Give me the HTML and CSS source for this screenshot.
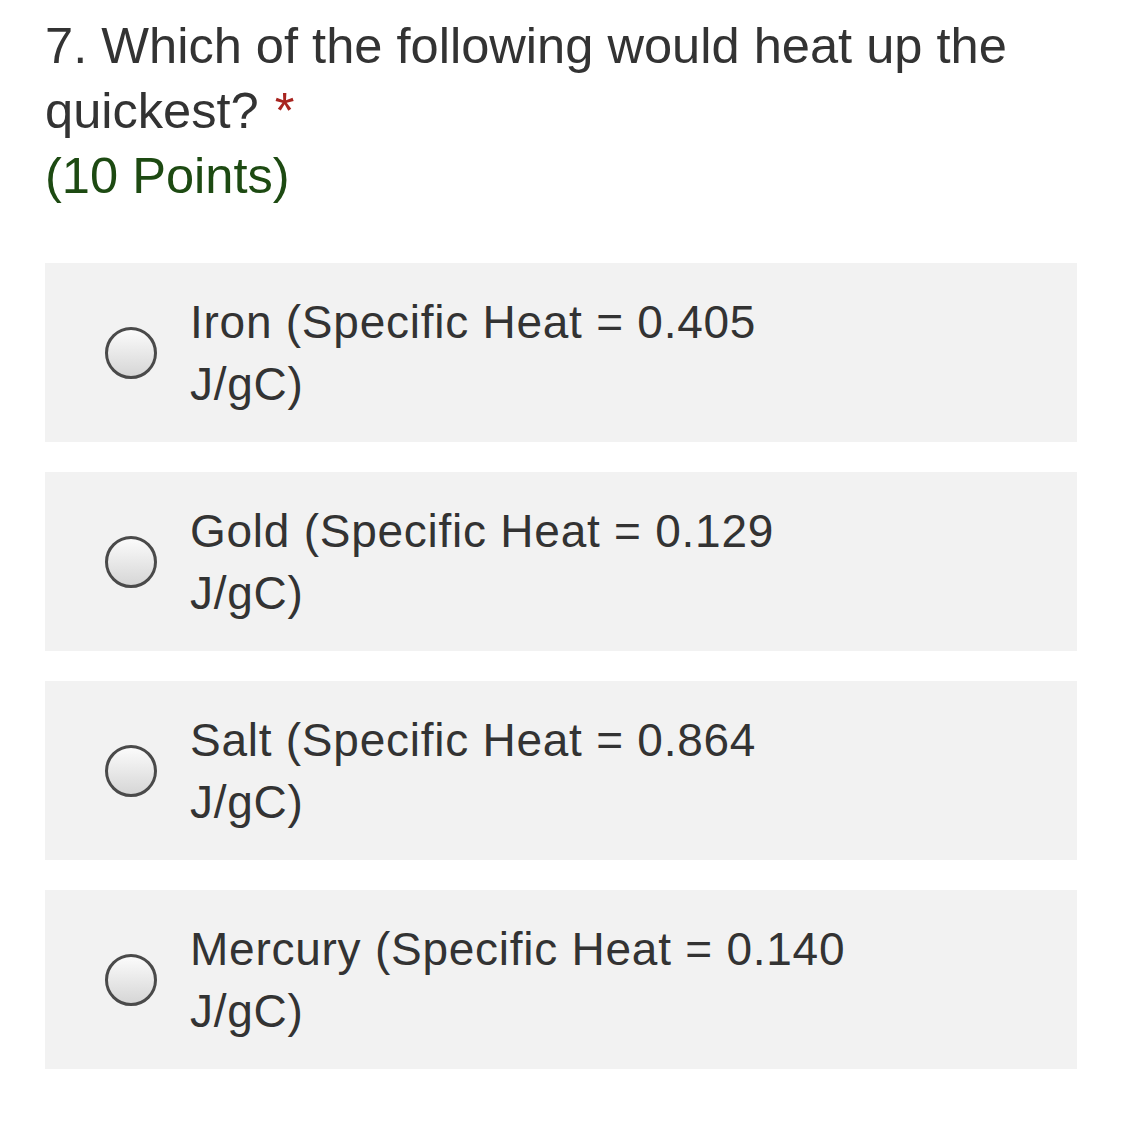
FILE: index.html
```html
<!DOCTYPE html>
<html>
<head>
<meta charset="utf-8">
<link rel="stylesheet" href="styles.css">
</head>
<body>
<div class="question">
  <div class="title">7. Which of the following would heat up the quickest? <span class="req">*</span></div>
  <div class="points">(10 Points)</div>
  <div class="options">
    <label class="option"><span class="radio"></span><span class="text">Iron (Specific Heat = 0.405 J/gC)</span></label>
    <label class="option"><span class="radio"></span><span class="text">Gold (Specific Heat = 0.129 J/gC)</span></label>
    <label class="option"><span class="radio"></span><span class="text">Salt (Specific Heat = 0.864 J/gC)</span></label>
    <label class="option"><span class="radio"></span><span class="text">Mercury (Specific Heat = 0.140 J/gC)</span></label>
  </div>
</div>
</body>
</html>
```
FILE: styles.css
```css
html, body {
  margin: 0;
  padding: 0;
  background: #ffffff;
}
body {
  font-family: "Liberation Sans", Arial, sans-serif;
  color: #333333;
}
.question {
  padding: 13px 45px 0 45px;
}
.title {
  font-size: 50.6px;
  line-height: 65px;
  color: #333333;
  max-width: 980px;
}
.req {
  color: #a8241f;
  margin-left: 2px;
}
.points {
  font-size: 50.6px;
  line-height: 65px;
  color: #1d4a12;
}
.options {
  margin-top: 55px;
  display: flex;
  flex-direction: column;
  gap: 30px;
}
.option {
  display: flex;
  align-items: center;
  background: #f2f2f2;
  height: 179px;
  padding-left: 60px;
  box-sizing: border-box;
}
.radio {
  flex: none;
  width: 46px;
  height: 46px;
  border: 3px solid #4a4a4a;
  border-radius: 50%;
  background: linear-gradient(#fbfbfb, #d6d6d6);
}
.text {
  margin-left: 33px;
  width: 672px;
  font-size: 46px;
  letter-spacing: 0.75px;
  line-height: 62px;
  color: #333333;
}
```
